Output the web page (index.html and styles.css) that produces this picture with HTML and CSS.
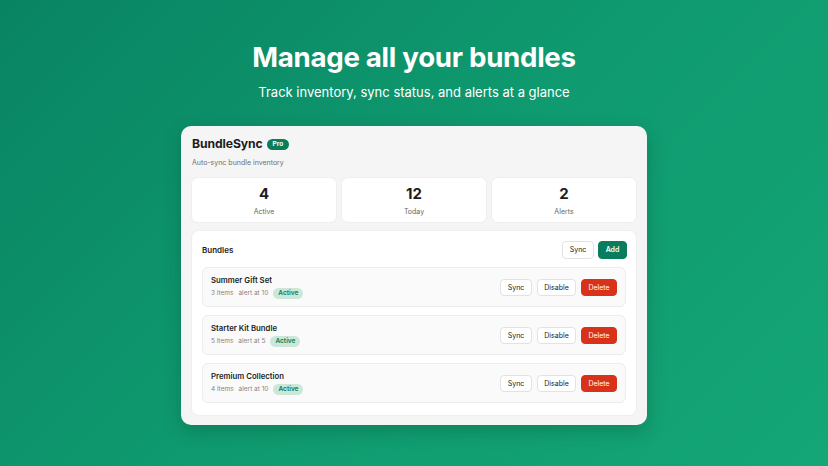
FILE: index.html
```html
<!DOCTYPE html>
<html>
<head>
<meta charset="utf-8">
<link rel="stylesheet" href="styles.css">
</head>
<body>
<main class="page">
  <h1 class="hero-title">Manage all your bundles</h1>
  <p class="hero-sub">Track inventory, sync status, and alerts at a glance</p>
  <section class="app">
    <div class="app-head">
      <span class="brand">BundleSync</span>
      <span class="pro">Pro</span>
    </div>
    <p class="tagline">Auto-sync bundle inventory</p>
    <div class="stats">
      <div class="stat"><div class="stat-num">4</div><div class="stat-label">Active</div></div>
      <div class="stat"><div class="stat-num">12</div><div class="stat-label">Today</div></div>
      <div class="stat"><div class="stat-num">2</div><div class="stat-label">Alerts</div></div>
    </div>
    <div class="panel">
      <div class="panel-head">
        <span class="panel-title">Bundles</span>
        <div class="actions">
          <button class="btn btn-sync">Sync</button>
          <button class="btn btn-primary">Add</button>
        </div>
      </div>
      <div class="rows">
        <div class="row">
          <div class="row-info">
            <div class="row-name">Summer Gift Set</div>
            <div class="row-meta"><span>3 items</span><span>alert at 10</span><span class="badge">Active</span></div>
          </div>
          <div class="row-actions">
            <button class="btn btn-sm btn-sync">Sync</button>
            <button class="btn btn-sm btn-disable">Disable</button>
            <button class="btn btn-sm btn-danger">Delete</button>
          </div>
        </div>
        <div class="row">
          <div class="row-info">
            <div class="row-name">Starter Kit Bundle</div>
            <div class="row-meta"><span>5 items</span><span>alert at 5</span><span class="badge">Active</span></div>
          </div>
          <div class="row-actions">
            <button class="btn btn-sm btn-sync">Sync</button>
            <button class="btn btn-sm btn-disable">Disable</button>
            <button class="btn btn-sm btn-danger">Delete</button>
          </div>
        </div>
        <div class="row">
          <div class="row-info">
            <div class="row-name">Premium Collection</div>
            <div class="row-meta"><span>4 items</span><span>alert at 10</span><span class="badge">Active</span></div>
          </div>
          <div class="row-actions">
            <button class="btn btn-sm btn-sync">Sync</button>
            <button class="btn btn-sm btn-disable">Disable</button>
            <button class="btn btn-sm btn-danger">Delete</button>
          </div>
        </div>
      </div>
    </div>
  </section>
</main>
</body>
</html>
```

FILE: styles.css
```css
* { box-sizing: border-box; }
html, body { margin: 0; padding: 0; }
body {
  width: 828px;
  height: 466px;
  overflow: hidden;
  font-family: Inter, "Liberation Sans", sans-serif;
  background: linear-gradient(135deg, #098463 0%, #0f9a6f 50%, #14a676 100%);
}
.page {
  display: flex;
  flex-direction: column;
  align-items: center;
  padding-top: 38px;
}
.hero-title {
  margin: 0;
  color: #fff;
  font-size: 27.7px;
  font-weight: 700;
  line-height: 38px;
  letter-spacing: -0.3px;
}
.hero-sub {
  margin: 7px 0 0;
  color: #fff;
  font-size: 13px;
  line-height: 18px;
  font-weight: 400;
}
.app {
  margin-top: 25px;
  width: 466px;
  background: #f5f5f5;
  border-radius: 10px;
  padding: 10px 11px 10px;
  box-shadow: 0 6px 18px rgba(0, 50, 30, 0.25);
}
.app-head {
  display: flex;
  align-items: center;
  gap: 4px;
  height: 16px;
}
.brand {
  font-size: 12.2px;
  font-weight: 700;
  color: #1d1d1d;
  letter-spacing: -0.1px;
  line-height: 16px;
}
.pro {
  background: #0a7d5c;
  color: #fff;
  font-size: 6.5px;
  font-weight: 700;
  border-radius: 6px;
  padding: 2px 6px;
  line-height: 7px;
}
.tagline {
  margin: 6px 0 0;
  font-size: 7px;
  color: #6f6f6f;
  line-height: 10px;
}
.stats {
  margin-top: 10px;
  display: grid;
  grid-template-columns: repeat(3, 1fr);
  gap: 6px;
}
.stat {
  background: #fff;
  border-radius: 6px;
  height: 44px;
  display: flex;
  flex-direction: column;
  align-items: center;
  justify-content: center;
  box-shadow: 0 0 0 1px #efefef;
}
.stat-num {
  font-size: 15px;
  font-weight: 700;
  color: #1d1d1d;
  line-height: 18px;
}
.stat-label {
  font-size: 7px;
  color: #666;
  margin-top: 4px;
  line-height: 9px;
}
.panel {
  margin-top: 9px;
  background: #fff;
  border-radius: 7px;
  padding: 10px 10px 12px;
  box-shadow: 0 0 0 1px #efefef;
}
.panel-head {
  display: flex;
  justify-content: space-between;
  align-items: center;
  height: 18px;
}
.panel-title {
  font-size: 8px;
  font-weight: 600;
  color: #1d1d1d;
}
.actions { display: flex; gap: 4px; margin-right: -1px; }
.row-actions { display: flex; gap: 5px; }
.btn {
  font-family: inherit;
  font-size: 7px;
  color: #222;
  background: #fff;
  border: 1px solid #e2e2e2;
  border-radius: 4px;
  height: 18px;
  padding: 0;
  line-height: 16px;
  text-align: center;
  cursor: pointer;
}
.btn-sync { width: 32px; }
.btn-primary {
  width: 29px;
  background: #0a7d5c;
  border-color: #0a7d5c;
  color: #fff;
  font-weight: 600;
}
.btn-sm {
  height: 17px;
  line-height: 15px;
}
.btn-disable { width: 39px; }
.btn-danger {
  background: #d8321a;
  border-color: #d8321a;
  color: #fff;
  width: 36px;
}
.rows {
  margin-top: 8px;
  display: flex;
  flex-direction: column;
  gap: 8px;
}
.row {
  background: #fafafa;
  border: 1px solid #ececec;
  border-radius: 6px;
  height: 40px;
  padding: 0 8px 0 8px;
  display: flex;
  align-items: center;
  justify-content: space-between;
}
.row-info { display: flex; flex-direction: column; gap: 2px; }
.row-name {
  font-size: 7.75px;
  font-weight: 600;
  color: #1d1d1d;
  line-height: 11px;
}
.row-meta {
  display: flex;
  align-items: center;
  gap: 5px;
  font-size: 6.5px;
  color: #858585;
  line-height: 7px;
}
.badge {
  background: #cbe7da;
  color: #0a7d5c;
  font-weight: 600;
  border-radius: 6px;
  padding: 2px 5px;
}
```
